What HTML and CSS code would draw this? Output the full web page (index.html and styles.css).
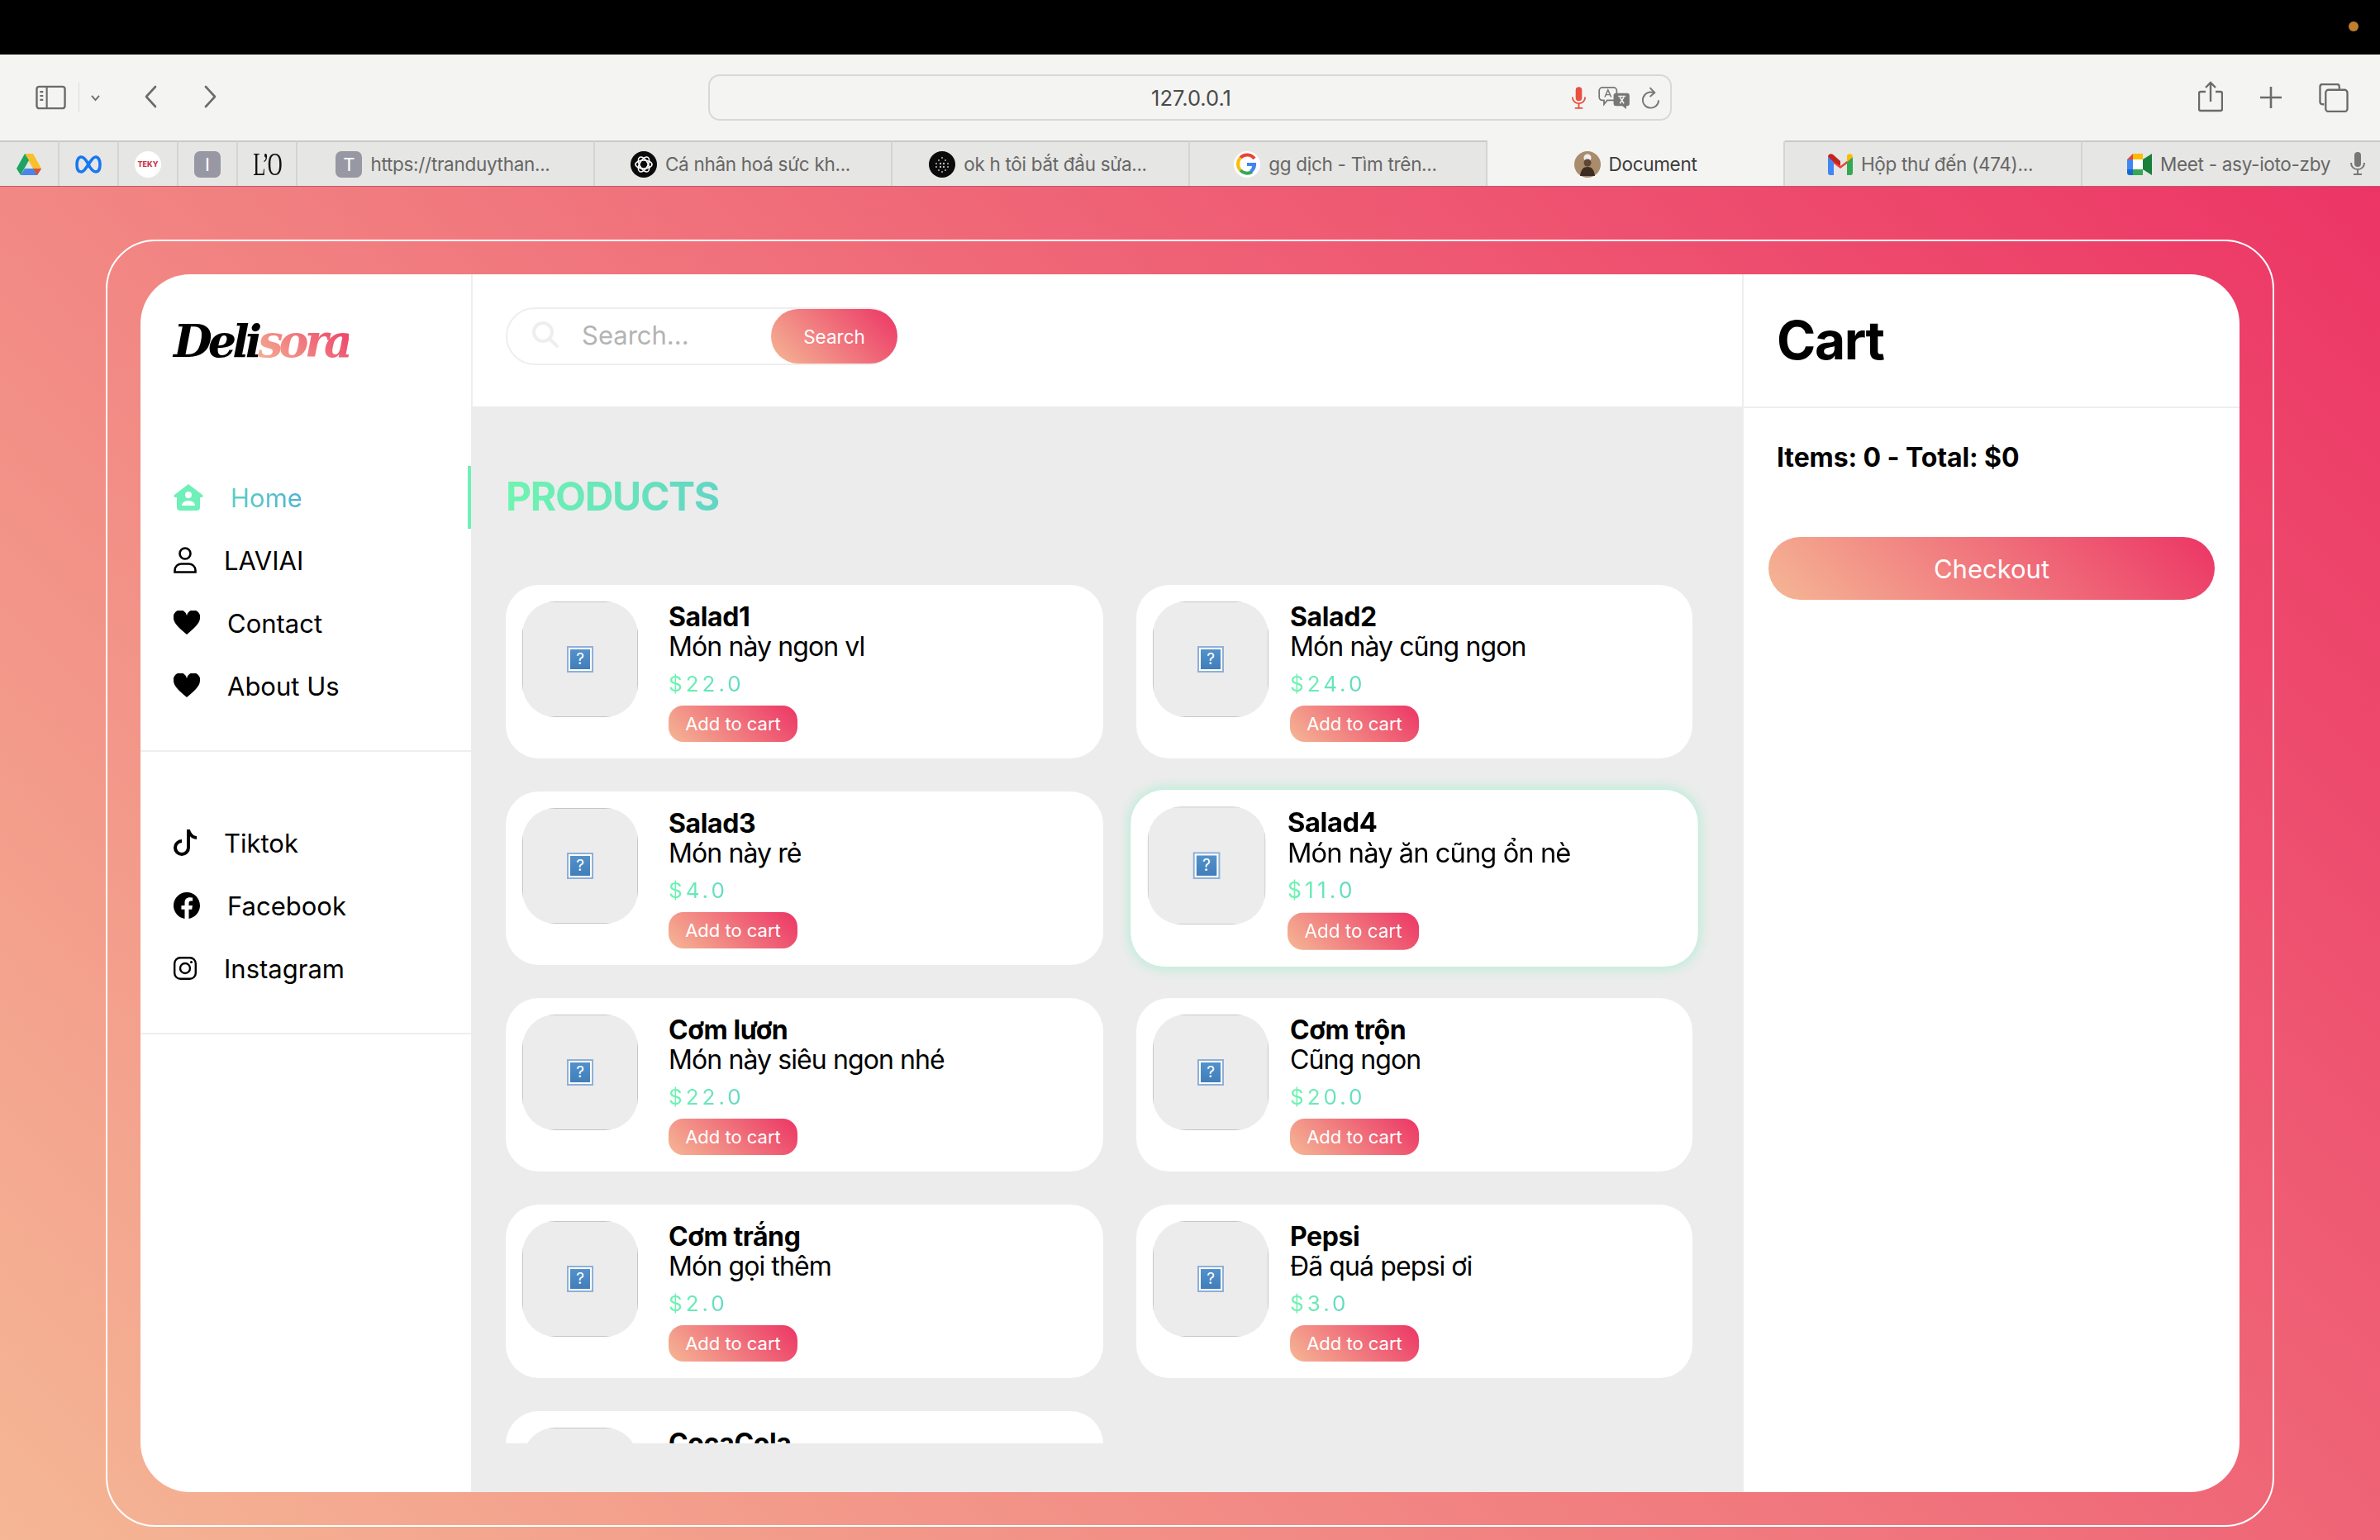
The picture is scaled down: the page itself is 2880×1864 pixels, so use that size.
FILE: index.html
```html
<!DOCTYPE html>
<html lang="vi">
<head>
    <meta charset="UTF-8">
    <meta name="viewport" content="width=device-width, initial-scale=1.0">
    <title>Document</title>
    <link rel="stylesheet" href="styles.css">
</head>
<body>
    <div class="menubar"><span class="cam-dot"></span></div>

    <div class="toolbar">
        <div class="tool-left">
            <svg class="ic-sidebar" viewBox="0 0 38 30"><rect x="1.5" y="1.5" width="35" height="27" rx="3" fill="none" stroke="#6b6b6b" stroke-width="2.5"/><path d="M14 2v26M5.500 8h4M5.500 13h4M5.500 18h4" stroke="#6b6b6b" stroke-width="2.200"/></svg>
            <span class="tool-sep"></span>
            <svg class="ic-down" viewBox="0 0 14 10"><path d="M2 2l5 6 5-6" fill="none" stroke="#6b6b6b" stroke-width="2"/></svg>
            <svg class="ic-back" viewBox="0 0 16 28"><path d="M14 2L3 14l11 12" fill="none" stroke="#6b6b6b" stroke-width="2.600" stroke-linecap="round" stroke-linejoin="round"/></svg>
            <svg class="ic-fwd" viewBox="0 0 16 28"><path d="M2 2l11 12L2 26" fill="none" stroke="#6b6b6b" stroke-width="2.600" stroke-linecap="round" stroke-linejoin="round"/></svg>
        </div>
        <div class="address">
            <span class="url">127.0.0.1</span>
            <svg class="ic-mic" viewBox="0 0 20 28"><rect x="6" y="0" width="8" height="18" rx="4" fill="#e8503f"/><path d="M2 13c0 5 3.500 8 8 8s8-3 8-8M10 21v5M5 27h10" fill="none" stroke="#e8503f" stroke-width="2"/></svg>
            <svg class="ic-translate" viewBox="0 0 40 28"><path d="M5 1h14a4 4 0 0 1 4 4v8a4 4 0 0 1-4 4h-8l-4 5v-5H5a4 4 0 0 1-4-4V5a4 4 0 0 1 4-4z" fill="#f4f4f2" stroke="#777" stroke-width="1.800"/><path d="M22 8h14a3 3 0 0 1 3 3v10a3 3 0 0 1-3 3h-1v4l-5-4h-8a3 3 0 0 1-3-3V11a3 3 0 0 1 3-3z" fill="#777"/><path d="M25 12h9M27 13l5 8M32 13l-5 8" stroke="#f4f4f2" stroke-width="1.600"/><path d="M8 13l4-9 4 9M9.500 10h5" fill="none" stroke="#777" stroke-width="1.500"/></svg>
            <svg class="ic-reload" viewBox="0 0 24 28"><path d="M16 7.500A10 10 0 1 0 22 17" fill="none" stroke="#777" stroke-width="2"/><path d="M11 1l6 6.500-6 5" fill="none" stroke="#777" stroke-width="2"/></svg>
        </div>
        <div class="tool-right">
            <svg class="ic-share" viewBox="0 0 30 38"><path d="M9 13H3a2 2 0 0 0-2 2v19a2 2 0 0 0 2 2h24a2 2 0 0 0 2-2V15a2 2 0 0 0-2-2h-6M15 25V2M9 8l6-6 6 6" fill="none" stroke="#6b6b6b" stroke-width="2.400"/></svg>
            <svg class="ic-plus" viewBox="0 0 28 28"><path d="M14 1v26M1 14h26" stroke="#6b6b6b" stroke-width="2.600"/></svg>
            <svg class="ic-tabs" viewBox="0 0 36 36"><path d="M6 26H4a3 3 0 0 1-3-3V4a3 3 0 0 1 3-3h18a3 3 0 0 1 3 3v3" fill="none" stroke="#6b6b6b" stroke-width="2.400"/><rect x="8" y="8" width="27" height="27" rx="3.500" fill="none" stroke="#6b6b6b" stroke-width="2.400"/></svg>
        </div>
    </div>

    <div class="tabbar">
        <div class="tab pinned">
            <svg class="fav" viewBox="0 0 32 32"><path d="M11 3h10l10 18H21z" fill="#f7c02d"/><path d="M11 3L1 21l5 8 10-18z" fill="#1ea362"/><path d="M6 29h20l5-8H11z" fill="#4a86e8"/><path d="M26 29l5-8H21z" fill="#d9503f"/></svg>
        </div>
        <div class="tab pinned">
            <svg class="fav" viewBox="0 0 32 32"><path d="M16 16C12 8 9 7 7 7c-3 0-5 4-5 9 0 6 2 9 5 9 4 0 6-5 9-9s5-9 9-9c3 0 5 4 5 9 0 6-2 9-5 9-2 0-5-1-9-9z" fill="none" stroke="#1877f2" stroke-width="3.600"/></svg>
        </div>
        <div class="tab pinned"><span class="fav-round white"><span class="teky">TEKY</span></span></div>
        <div class="tab pinned"><span class="fav-square">I</span></div>
        <div class="tab pinned"><span class="fav-lo">L’O</span></div>
        <div class="tab"><span class="fav-square">T</span><span class="tab-title">https://tranduythan...</span></div>
        <div class="tab">
            <svg class="fav" viewBox="0 0 32 32"><circle cx="16" cy="16" r="16" fill="#0b0b0b"/><g fill="none" stroke="#fff" stroke-width="1.600"><ellipse cx="16" cy="16" rx="10" ry="5"/><ellipse cx="16" cy="16" rx="10" ry="5" transform="rotate(60 16 16)"/><ellipse cx="16" cy="16" rx="10" ry="5" transform="rotate(120 16 16)"/></g></svg>
            <span class="tab-title">Cá nhân hoá sức kh...</span>
        </div>
        <div class="tab">
            <svg class="fav" viewBox="0 0 32 32"><circle cx="16" cy="16" r="16" fill="#0b0b0b"/><g fill="#bbb"><circle cx="16" cy="8" r="1"/><circle cx="12" cy="11" r="1"/><circle cx="20" cy="11" r="1"/><circle cx="9" cy="15" r="1"/><circle cx="14" cy="15" r="1.200"/><circle cx="18" cy="15" r="1.200"/><circle cx="23" cy="15" r="1"/><circle cx="9" cy="19" r="1"/><circle cx="14" cy="19" r="1.200"/><circle cx="18" cy="19" r="1.200"/><circle cx="23" cy="19" r="1"/><circle cx="12" cy="23" r="1"/><circle cx="20" cy="23" r="1"/><circle cx="16" cy="25" r="1"/></g></svg>
            <span class="tab-title">ok h tôi bắt đầu sửa...</span>
        </div>
        <div class="tab">
            <svg class="fav" viewBox="0 0 32 32"><circle cx="16" cy="16" r="16" fill="#fff"/><path d="M25 9a11 11 0 0 0-17-1" fill="none" stroke="#ea4335" stroke-width="4"/><path d="M8 8a11 11 0 0 0 0 15" fill="none" stroke="#fbbc05" stroke-width="4"/><path d="M8 23a11 11 0 0 0 14 2" fill="none" stroke="#34a853" stroke-width="4"/><path d="M16 14h11c.500 5-1 9-5 12l-3-3c2-1 3-3 3-5h-6z" fill="#4285f4"/></svg>
            <span class="tab-title">gg dịch - Tìm trên...</span>
        </div>
        <div class="tab active">
            <svg class="fav" viewBox="0 0 32 32"><circle cx="16" cy="16" r="16" fill="#a98c6c"/><circle cx="16" cy="8" r="4.500" fill="#eee"/><circle cx="16" cy="14" r="4.500" fill="#5e4534"/><path d="M7 30c1-8 4-11 9-11s8 3 9 11z" fill="#3d2c22"/></svg>
            <span class="tab-title">Document</span>
        </div>
        <div class="tab">
            <svg class="fav gmail" viewBox="0 0 30 26"><path d="M2 26V5l13 10L28 5v21h-5V12l-8 6-8-6v14z" fill="#ea4335"/><path d="M0 4v19a3 3 0 0 0 3 3h4V10z" fill="#4285f4"/><path d="M30 4v19a3 3 0 0 1-3 3h-4V10z" fill="#34a853"/><path d="M23 10l7-6c0-3-3-5-6-3l-1 1z" fill="#fbbc04"/><path d="M7 10L0 4c0-3 3-5 6-3l9 8v6z" fill="#c5221f"/></svg>
            <span class="tab-title">Hộp thư đến (474)...</span>
        </div>
        <div class="tab">
            <svg class="fav meet" viewBox="0 0 30 26"><path d="M7 0h12v7H7z" fill="#fbbc04"/><path d="M7 0L0 7h7z" fill="#ea4335"/><path d="M0 7h7v12H0z" fill="#4285f4"/><path d="M0 19h7v7H3a3 3 0 0 1-3-3z" fill="#1967d2"/><path d="M7 19h12v7H7z" fill="#34a853"/><path d="M19 7v12l11 7V0z" fill="#188038"/><path d="M7 7h12v12H7z" fill="#fff"/></svg>
            <span class="tab-title">Meet - asy-ioto-zby</span>
            <svg class="ic-tabmic" viewBox="0 0 18 28"><rect x="5" y="0" width="8" height="18" rx="4" fill="#777"/><path d="M1 13c0 5 3.500 8 8 8s8-3 8-8M9 21v5M4 27h10" fill="none" stroke="#777" stroke-width="2"/></svg>
        </div>
    </div>

    <div class="page">
        <div class="frame">
            <div class="panel">

                <aside class="sidebar">
                    <div class="logo">Deli<span class="logo-pink">sora</span></div>

                    <nav class="nav-group first">
                        <a class="nav-link active">
                            <svg class="ic-home" viewBox="0 0 36 32"><path d="M18 0l17 13c1 1 .500 3-1 3h-2v12a4 4 0 0 1-4 4H8a4 4 0 0 1-4-4V16H2c-1.500 0-2-2-1-3z" fill="#6ef0b8"/><circle cx="18" cy="13" r="4" fill="#fff"/><path d="M10 26c0-4 4-6 8-6s8 2 8 6z" fill="#fff"/></svg>
                            <span class="home-text">Home</span>
                        </a>
                        <a class="nav-link">
                            <svg class="ic-person" viewBox="0 0 28 32"><circle cx="14" cy="8" r="6.500" fill="none" stroke="#000" stroke-width="2.600"/><path d="M1.500 30.500v-2c0-5 4-8 8-8h9c4 0 8 3 8 8v2z" fill="none" stroke="#000" stroke-width="2.600"/></svg>
                            <span>LAVIAI</span>
                        </a>
                        <a class="nav-link">
                            <svg class="ic-heart" viewBox="0 0 32 28"><path d="M16 28C8 21 0 15 0 8a8 8 0 0 1 16-3 8 8 0 0 1 16 3c0 7-8 13-16 20z"/></svg>
                            <span>Contact</span>
                        </a>
                        <a class="nav-link">
                            <svg class="ic-heart" viewBox="0 0 32 28"><path d="M16 28C8 21 0 15 0 8a8 8 0 0 1 16-3 8 8 0 0 1 16 3c0 7-8 13-16 20z"/></svg>
                            <span>About Us</span>
                        </a>
                    </nav>

                    <nav class="nav-group">
                        <a class="nav-link">
                            <svg class="ic-social" viewBox="1 0 14 16"><path d="M9 0h1.980c.144.715.54 1.617 1.235 2.512C12.895 3.389 13.797 4 15 4v2c-1.753 0-3.070-.814-4-1.829V11a5 5 0 1 1-5-5v2a3 3 0 1 0 3 3V0Z"/></svg>
                            <span>Tiktok</span>
                        </a>
                        <a class="nav-link">
                            <svg class="ic-fb" viewBox="0 0 16 16"><path d="M16 8.049c0-4.446-3.582-8.050-8-8.050C3.580 0-.002 3.603-.002 8.050c0 4.017 2.926 7.347 6.750 7.951v-5.625h-2.030V8.050H6.750V6.275c0-2.017 1.195-3.131 3.022-3.131.876 0 1.791.157 1.791.157v1.980h-1.009c-.993 0-1.303.621-1.303 1.258v1.510h2.218l-.354 2.326H9.250V16c3.824-.604 6.750-3.934 6.750-7.951z"/></svg>
                            <span>Facebook</span>
                        </a>
                        <a class="nav-link">
                            <svg class="ic-social" viewBox="0 0 28 28"><rect x="1.200" y="1.200" width="25.600" height="25.600" rx="7" fill="none" stroke="#000" stroke-width="2.400"/><circle cx="14" cy="14" r="6" fill="none" stroke="#000" stroke-width="2.400"/><circle cx="21.500" cy="6.500" r="1.600"/></svg>
                            <span>Instagram</span>
                        </a>
                    </nav>
                </aside>

                <main class="main">
                    <header class="main-header">
                        <form class="search">
                            <svg class="ic-search" viewBox="0 0 32 32"><circle cx="13" cy="13" r="11" fill="none" stroke="#eeeeee" stroke-width="4"/><path d="M21 21l9 9" stroke="#eeeeee" stroke-width="4" stroke-linecap="round"/></svg>
                            <span class="search-input">Search...</span>
                            <button class="search-btn" type="button">Search</button>
                        </form>
                    </header>

                    <div class="products">
                        <h2 class="products-title">PRODUCTS</h2>
                        <div class="product-scroll">
                            <div class="product-grid">
                                <article class="card">
                                    <div class="thumb"><div class="thumb-in"><span class="broken">?</span></div></div>
                                    <div class="info"><div class="name">Salad1</div><div class="desc">Món này ngon vl</div><div class="price">$22.0</div><button class="add-btn">Add to cart</button></div>
                                </article>
                                <article class="card">
                                    <div class="thumb"><div class="thumb-in"><span class="broken">?</span></div></div>
                                    <div class="info"><div class="name">Salad2</div><div class="desc">Món này cũng ngon</div><div class="price">$24.0</div><button class="add-btn">Add to cart</button></div>
                                </article>
                                <article class="card">
                                    <div class="thumb"><div class="thumb-in"><span class="broken">?</span></div></div>
                                    <div class="info"><div class="name">Salad3</div><div class="desc">Món này rẻ</div><div class="price">$4.0</div><button class="add-btn">Add to cart</button></div>
                                </article>
                                <article class="card hovered">
                                    <div class="thumb"><div class="thumb-in"><span class="broken">?</span></div></div>
                                    <div class="info"><div class="name">Salad4</div><div class="desc">Món này ăn cũng ổn nè</div><div class="price">$11.0</div><button class="add-btn">Add to cart</button></div>
                                </article>
                                <article class="card">
                                    <div class="thumb"><div class="thumb-in"><span class="broken">?</span></div></div>
                                    <div class="info"><div class="name">Cơm lươn</div><div class="desc">Món này siêu ngon nhé</div><div class="price">$22.0</div><button class="add-btn">Add to cart</button></div>
                                </article>
                                <article class="card">
                                    <div class="thumb"><div class="thumb-in"><span class="broken">?</span></div></div>
                                    <div class="info"><div class="name">Cơm trộn</div><div class="desc">Cũng ngon</div><div class="price">$20.0</div><button class="add-btn">Add to cart</button></div>
                                </article>
                                <article class="card">
                                    <div class="thumb"><div class="thumb-in"><span class="broken">?</span></div></div>
                                    <div class="info"><div class="name">Cơm trắng</div><div class="desc">Món gọi thêm</div><div class="price">$2.0</div><button class="add-btn">Add to cart</button></div>
                                </article>
                                <article class="card">
                                    <div class="thumb"><div class="thumb-in"><span class="broken">?</span></div></div>
                                    <div class="info"><div class="name">Pepsi</div><div class="desc">Đã quá pepsi ơi</div><div class="price">$3.0</div><button class="add-btn">Add to cart</button></div>
                                </article>
                                <article class="card">
                                    <div class="thumb"><div class="thumb-in"></div></div>
                                    <div class="info"><div class="name">CocaCola</div></div>
                                </article>
                            </div>
                        </div>
                    </div>
                </main>

                <aside class="cart">
                    <div class="cart-header"><h1 class="cart-title">Cart</h1></div>
                    <div class="cart-total">Items: 0 - Total: $0</div>
                    <button class="checkout">Checkout</button>
                </aside>

            </div>
        </div>
    </div>
</body>
</html>
```

FILE: styles.css
```css
* {
    box-sizing: border-box;
}
html, body {
    margin: 0;
    height: 1864px;
    overflow: hidden;
}
body {
    display: flex;
    flex-direction: column;
    font-family: Inter, "Noto Sans", sans-serif;
    color: #000;
}
svg {
    display: block;
    flex: none;
}
button {
    border: 0;
    font-family: inherit;
    color: #fff;
    background: linear-gradient(45deg, #f5b795, #ec3565);
}

/* browser chrome */
.menubar {
    height: 66px;
    background: #000;
    position: relative;
}
.cam-dot {
    position: absolute;
    left: 2842px;
    top: 26px;
    width: 12px;
    height: 12px;
    border-radius: 50%;
    background: #c07f2c;
}
.toolbar {
    height: 104px;
    background: #f4f4f2;
    display: flex;
    align-items: center;
}
.tool-left {
    width: 857px;
    display: flex;
    align-items: center;
    padding-left: 43px;
}
.ic-sidebar { width: 37px; height: 30px; }
.tool-sep { width: 1px; height: 36px; background: #dcdcda; margin-left: 15px; }
.ic-down { width: 13px; height: 9px; margin-left: 13px; }
.ic-back { width: 16px; height: 28px; margin-left: 52px; margin-top: -2px; }
.ic-fwd { width: 16px; height: 28px; margin-left: 57px; margin-top: -2px; }
.address {
    width: 1166px;
    height: 56px;
    border: 2px solid #d8d8d6;
    border-radius: 14px;
    display: flex;
    align-items: center;
    position: relative;
    padding-left: 1042px;
}
.url {
    position: absolute;
    left: 3px;
    right: 0;
    text-align: center;
    font-size: 25.5px;
    color: #4a4a4a;
}
.ic-mic { width: 19px; height: 27px; }
.ic-translate { width: 39px; height: 27px; margin-left: 14px; }
.ic-reload { width: 23px; height: 27px; margin-left: 13px; }
.tool-right {
    display: flex;
    align-items: center;
    padding-left: 637px;
}
.ic-share { width: 30px; height: 38px; margin-top: -3px; }
.ic-plus { width: 28px; height: 28px; margin-left: 44px; }
.ic-tabs { width: 36px; height: 35px; margin-left: 44px; }

.tabbar {
    height: 56px;
    display: flex;
    background: #e6e6e4;
    border-bottom: 1px solid rgba(170, 30, 60, .7);
}
.tab {
    width: 360px;
    display: flex;
    align-items: center;
    justify-content: center;
    gap: 10px;
    padding-right: 6px;
    border-top: 2px solid #c9c9c7;
    border-right: 2px solid #d4d4d2;
    font-size: 22.5px;
    color: #666;
    white-space: nowrap;
    position: relative;
}
.tab:last-child { border-right: 0; }
.tab.pinned { width: 72px; padding-right: 0; }
.tab.active {
    background: #f4f4f2;
    border-top-color: #f4f4f2;
    color: #3c3c3c;
    padding-right: 0;
}
.tab-title { letter-spacing: -.3px; }
.fav { width: 32px; height: 32px; }
.fav.gmail, .fav.meet { width: 30px; height: 26px; }
.ic-tabmic {
    position: absolute;
    right: 18px;
    top: 12px;
    width: 18px;
    height: 28px;
}
.fav-round {
    width: 32px;
    height: 32px;
    border-radius: 50%;
    display: flex;
    align-items: center;
    justify-content: center;
}
.fav-round.white { background: #fff; }
.teky {
    font-size: 9px;
    font-weight: 800;
    color: #c9374a;
}
.fav-square {
    width: 32px;
    height: 32px;
    border-radius: 7px;
    background: #9798a4;
    color: #fff;
    font-size: 22px;
    display: flex;
    align-items: center;
    justify-content: center;
}
.fav-lo {
    font-family: "Liberation Serif", serif;
    font-size: 40px;
    line-height: 40px;
    letter-spacing: -3px;
    color: #111;
    transform: scaleX(.62);
}

/* page */
.page {
    flex: 1;
    padding: 64px 128px 16px;
    background: linear-gradient(45deg, #f5b795, #ec3565);
}
.frame {
    height: 1558px;
    border: 2px solid #fff;
    border-radius: 60px;
    padding: 40px;
}
.panel {
    height: 1474px;
    display: flex;
    background: #fff;
    border-radius: 60px;
    overflow: hidden;
}

/* sidebar */
.sidebar {
    width: 400px;
    flex: none;
}
.logo {
    height: 232px;
    padding: 46px 0 0 40px;
    font-family: "DejaVu Serif", serif;
    font-style: italic;
    font-weight: 700;
    font-size: 54px;
    line-height: 70px;
    letter-spacing: -5px;
}
.logo-pink {
    background: linear-gradient(45deg, #f5b795, #ec3565);
    -webkit-background-clip: text;
    background-clip: text;
    color: transparent;
}
.nav-group {
    padding: 72px 0 40px;
    border-bottom: 2px solid #eee;
}
.nav-group.first {
    padding-top: 0;
}
.nav-link {
    height: 76px;
    padding-left: 40px;
    display: flex;
    align-items: center;
    gap: 33px;
    font-size: 31px;
    position: relative;
}
.nav-link.active::after {
    content: "";
    position: absolute;
    right: 0;
    top: 0;
    width: 4px;
    height: 76px;
    background: #6ef0b8;
}
.home-text {
    background: linear-gradient(90deg, #5ccfc2, #4fb3d1);
    -webkit-background-clip: text;
    background-clip: text;
    color: transparent;
}
.ic-home { width: 36px; height: 32px; }
.ic-person { width: 28px; height: 32px; }
.ic-heart { width: 32px; height: 30px; }
.ic-social { width: 28px; height: 32px; }
.ic-fb { width: 32px; height: 32px; }

/* main */
.main {
    width: 1538px;
    flex: none;
    background: #ececec;
}
.main-header {
    height: 160px;
    background: #fff;
    border-left: 2px solid #eee;
    padding: 40px 0 0 40px;
}
.search {
    width: 474px;
    height: 70px;
    border: 2px solid #eee;
    border-radius: 35px;
    margin: 0;
    display: flex;
    align-items: center;
    padding-left: 30px;
    position: relative;
}
.ic-search { width: 32px; height: 32px; margin-top: -4px; }
.search-input {
    margin-left: 28px;
    margin-top: -4px;
    font-size: 31px;
    color: #b4b4b4;
}
.search-btn {
    position: absolute;
    right: -2px;
    top: 0;
    width: 153px;
    height: 66px;
    border-radius: 33px;
    font-size: 22.5px;
}
.products {
    padding: 80px 0 0 42px;
}
.products-title {
    margin: 0 0 78px;
    font-size: 48px;
    line-height: 58px;
    font-weight: 700;
    letter-spacing: -1.300px;
    width: 400px;
    background: linear-gradient(90deg, #6ef5b0, #5bc4d0);
    -webkit-background-clip: text;
    background-clip: text;
    color: transparent;
}
.product-scroll {
    height: 1039px;
    overflow-y: scroll;
}
.product-scroll::-webkit-scrollbar {
    width: 21px;
}
.product-scroll::-webkit-scrollbar-track {
    background: #f0f0f0;
}
.product-scroll::-webkit-scrollbar-thumb {
    background: transparent;
}
.product-grid {
    display: grid;
    grid-template-columns: 723px 673px;
    gap: 40px;
    width: 1436px;
}
.card {
    height: 210px;
    background: #fff;
    border-radius: 40px;
    padding: 20px;
    display: flex;
    gap: 37px;
}
.card:nth-child(even) {
    gap: 26px;
}
.card.hovered {
    transform: scale(1.02);
    box-shadow: 0 0 14px 2px rgba(110, 240, 184, .4);
}
.thumb {
    width: 140px;
    height: 140px;
    flex: none;
    border-radius: 40px;
    overflow: hidden;
}
.thumb-in {
    height: 100%;
    background: #ececec;
    border: 1px solid #c6c6c6;
    display: flex;
    align-items: center;
    justify-content: center;
}
.broken {
    width: 32px;
    height: 32px;
    border: 2px solid #8fb0d8;
    outline: 2px solid #fff;
    outline-offset: -4px;
    background: linear-gradient(#5493cd, #3f7cb8);
    color: #fff;
    font-size: 19px;
    line-height: 28px;
    text-align: center;
}
.info {
    display: flex;
    flex-direction: column;
    align-items: flex-start;
}
.name {
    font-size: 32px;
    line-height: 38px;
    font-weight: 700;
    letter-spacing: -.4px;
}
.desc {
    font-size: 32px;
    line-height: 38px;
    letter-spacing: -.9px;
    margin-top: -2px;
}
.price {
    margin-top: 10px;
    font-size: 26px;
    line-height: 32px;
    letter-spacing: 4px;
    background: linear-gradient(90deg, #6ef5b0, #60d8c2);
    -webkit-background-clip: text;
    background-clip: text;
    color: transparent;
}
.add-btn {
    margin-top: 10px;
    width: 156px;
    height: 46px;
    padding: 0;
    border-radius: 18px;
    font-size: 22px;
    white-space: nowrap;
}

/* cart */
.cart {
    flex: 1;
    border-left: 2px solid #eee;
}
.cart-header {
    height: 162px;
    border-bottom: 2px solid #eee;
    padding: 40px 0 0 40px;
}
.cart-title {
    margin: 0;
    font-size: 64px;
    line-height: 80px;
    font-weight: 700;
    letter-spacing: -1.400px;
}
.cart-total {
    margin: 40px 0 0 40px;
    font-size: 32px;
    line-height: 40px;
    font-weight: 700;
    letter-spacing: -.1px;
}
.checkout {
    display: block;
    margin: 76px 0 0 30px;
    width: 540px;
    height: 76px;
    border-radius: 38px;
    font-size: 31px;
}
```
